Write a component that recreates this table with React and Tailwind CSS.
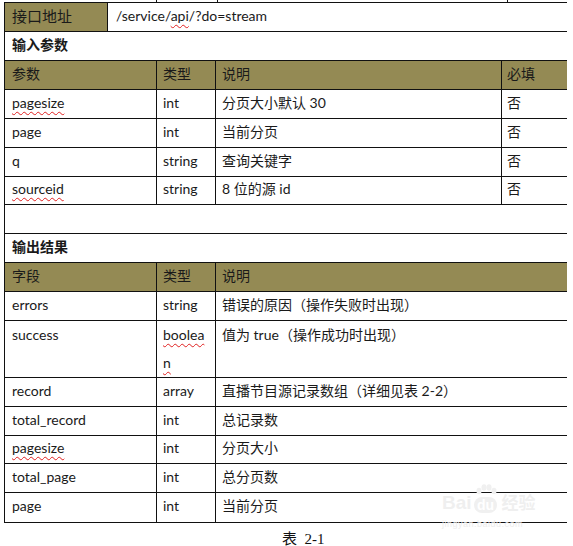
import React from "react";

const olive = "bg-[#948a54]";
const font = { fontFamily: '"Lato", "Noto Sans CJK SC", sans-serif' };

const W = ["w-[152px]", "w-[59px]", "w-[286px]", "w-[65px]"];

function Squig({ children }) {
  return (
    <span className="underline decoration-wavy decoration-[#e02020] decoration-1 underline-offset-[3px]">
      {children}
    </span>
  );
}

function Row({ h, children, className = "" }) {
  return (
    <div className={`flex border-b border-[#111] ${h} ${className}`}>{children}</div>
  );
}

function Cell({ w, children, pl = "pl-[6px]", last = false, top = false, className = "" }) {
  return (
    <div
      className={`${w} shrink-0 ${last ? "" : "border-r border-[#111]"} ${pl} flex ${
        top ? "items-start" : "items-center pb-[3px]"
      } ${className}`}
    >
      {children}
    </div>
  );
}

function DataRow({ h, cells, header = false, three = false }) {
  return (
    <Row h={h} className={header ? olive : ""}>
      <Cell w={W[0]} pl="pl-[7px]">{cells[0]}</Cell>
      <Cell w={W[1]}>{cells[1]}</Cell>
      {three ? (
        <Cell w="w-[351px]" last>{cells[2]}</Cell>
      ) : (
        <>
          <Cell w={W[2]}>{cells[2]}</Cell>
          <Cell w={W[3]} pl="pl-[5px]" last>{cells[3]}</Cell>
        </>
      )}
    </Row>
  );
}

export default function App() {
  return (
    <div
      className="relative w-[573px] h-[546px] overflow-hidden bg-white text-[14px] text-[#1a1a1a] leading-[20px]"
      style={font}
    >
      {/* partial row above */}
      <div className="flex h-[2px]">
        <div className="w-[156px]" />
        <div className="w-px bg-[#111]" />
        <div className="w-[60px]" />
        <div className="w-px bg-[#111]" />
        <div className="w-[289px]" />
        <div className="w-px bg-[#111]" />
      </div>

      <div className="ml-[4px] w-[563px] border-l border-t border-[#111]">
        <Row h="h-[29px]">
          <Cell w="w-[103px]" pl="pl-[7px]" className={`${olive} text-[15px]`}>
            接口地址
          </Cell>
          <Cell w="w-[459px]" pl="pl-[8px]" last>
            <span>
              /service/<Squig>api</Squig>/?do=stream
            </span>
          </Cell>
        </Row>
        <Row h="h-[29px]">
          <Cell w="w-[562px]" pl="pl-[7px]" last className="font-bold">
            输入参数
          </Cell>
        </Row>
        <DataRow h="h-[29px]" header cells={["参数", "类型", "说明", "必填"]} />
        <DataRow h="h-[29px]" cells={[<Squig>pagesize</Squig>, "int", "分页大小默认 30", "否"]} />
        <DataRow h="h-[29px]" cells={["page", "int", "当前分页", "否"]} />
        <DataRow h="h-[29px]" cells={["q", "string", "查询关键字", "否"]} />
        <DataRow h="h-[28px]" cells={[<Squig>sourceid</Squig>, "string", "8 位的源 id", "否"]} />
        <Row h="h-[29px]">
          <div className="w-[562px]" />
        </Row>
        <Row h="h-[29px]">
          <Cell w="w-[562px]" pl="pl-[7px]" last className="font-bold">
            输出结果
          </Cell>
        </Row>
        <DataRow h="h-[29px]" header three cells={["字段", "类型", "说明"]} />
        <DataRow h="h-[29px]" three cells={["errors", "string", "错误的原因（操作失败时出现）"]} />
        <Row h="h-[57px]">
          <Cell w={W[0]} pl="pl-[7px]" top className="pt-[4px]">
            success
          </Cell>
          <Cell w={W[1]} top className="pt-[4px]">
            <div className="leading-[28px] -mt-[4px]">
              <div>
                <Squig>boolea</Squig>
              </div>
              <div>
                <Squig>n</Squig>
              </div>
            </div>
          </Cell>
          <Cell w="w-[351px]" last top className="pt-[4px]">
            值为 true（操作成功时出现）
          </Cell>
        </Row>
        <DataRow h="h-[29px]" three cells={["record", "array", "直播节目源记录数组（详细见表 2-2）"]} />
        <DataRow h="h-[29px]" three cells={["total_record", "int", "总记录数"]} />
        <DataRow h="h-[28px]" three cells={[<Squig>pagesize</Squig>, "int", "分页大小"]} />
        <DataRow h="h-[29px]" three cells={["total_page", "int", "总分页数"]} />
        <DataRow h="h-[30px]" three cells={["page", "int", "当前分页"]} />
      </div>

      {/* caption */}
      <div
        className="pl-[282px] pt-[6px] text-[15px] leading-[20px] text-[#111]"
        style={{ fontFamily: '"Liberation Serif", "Noto Sans CJK SC", serif' }}
      >
        表&nbsp;&nbsp;2-1
      </div>

      {/* Baidu watermark overlay */}
      <div className="absolute left-[442px] top-[484px] w-[100px] h-[50px] pointer-events-none select-none">
        <div className="flex items-end gap-[2px]">
          <span className="text-[19px] leading-[20px] font-bold text-[#efefef] [font-family:'Liberation_Sans',sans-serif]">
            Bai
          </span>
          <span className="relative flex flex-col items-center">
            <svg width="24" height="12" viewBox="0 0 24 12" className="mb-[1px]">
              <ellipse cx="5" cy="7" rx="2.5" ry="3.2" fill="#f0f0f0" />
              <ellipse cx="10" cy="3.5" rx="2.5" ry="3.2" fill="#f0f0f0" />
              <ellipse cx="15" cy="3.5" rx="2.5" ry="3.2" fill="#f0f0f0" />
              <ellipse cx="20" cy="7" rx="2.5" ry="3.2" fill="#f0f0f0" />
            </svg>
            <span className="rounded-full bg-[#f0f0f0] px-[3px] text-[14px] leading-[16px] font-bold text-white [font-family:'Liberation_Sans',sans-serif]">
              du
            </span>
          </span>
          <span className="text-[17px] leading-[20px] font-bold text-[#efefef] ml-[2px]">经验</span>
        </div>
        <div className="mt-[6px] text-[9px] leading-[10px] text-[#ececec] tracking-[0.5px] [font-family:'Liberation_Sans',sans-serif]">
          jingyan.baidu.com
        </div>
      </div>
    </div>
  );
}
